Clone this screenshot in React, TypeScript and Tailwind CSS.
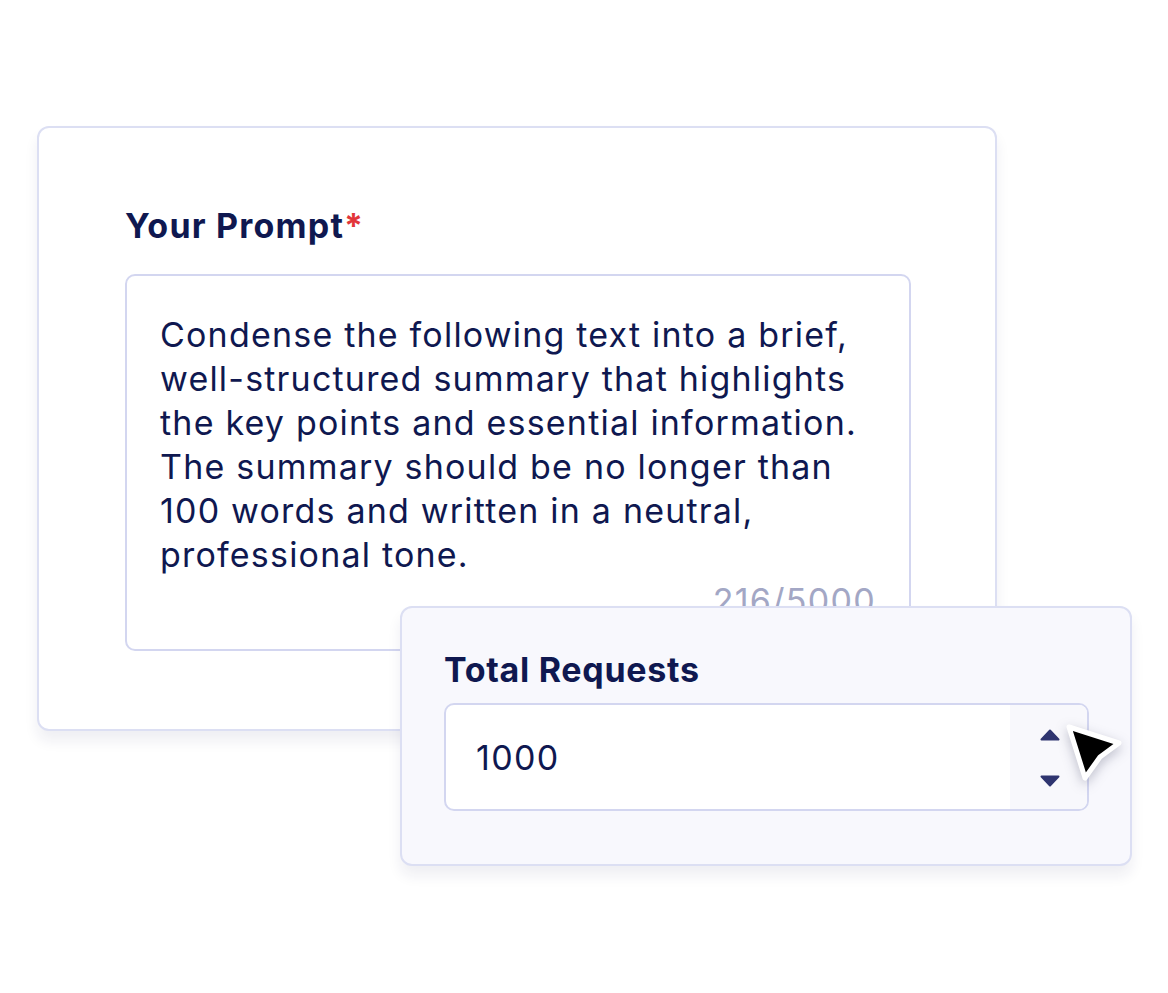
import React from 'react'

const lines = [
  'Condense the following text into a brief,',
  'well-structured summary that highlights',
  'the key points and essential information.',
  'The summary should be no longer than',
  '100 words and written in a neutral,',
  'professional tone.',
]

function Cursor() {
  return (
    <svg width="64" height="64" viewBox="0 0 64 64" className="drop-shadow-[0_4px_6px_rgba(20,24,60,0.25)]">
      <path
        d="M6 5 L56 21 L37 35 L22 56 Z"
        fill="#000"
        stroke="#fff"
        strokeWidth="5"
        strokeLinejoin="round"
      />
    </svg>
  )
}

export default function App() {
  return (
    <div className="w-[1168px] h-[993px] bg-white relative overflow-hidden font-['Inter',sans-serif] text-[#0f1850]">
      {/* prompt card */}
      <div className="absolute left-[37px] top-[126px] w-[960px] h-[605px] rounded-xl border-2 border-[#dcdff3] bg-white shadow-[0_10px_14px_rgba(30,35,80,0.07)] pl-[86px] pt-[76px]">
        <div className="text-[34px] font-bold leading-[44px] tracking-[1.2px]">
          Your Prompt<span className="text-[#e2363a]">*</span>
        </div>
        <div className="mt-[26px] w-[786px] h-[377px] rounded-[10px] border-2 border-[#d3d6f0] pl-[33px] pr-[33px] pt-[37px] flex flex-col">
          <div className="text-[34px] leading-[44px] tracking-[1.2px]">
            {lines.map((l) => (
              <div key={l}>{l}</div>
            ))}
          </div>
          <div className="mt-[2px] text-right text-[34px] leading-[44px] tracking-[1.3px] text-[#a3a7c5]">216/5000</div>
        </div>
      </div>

      {/* requests card */}
      <div className="absolute left-[400px] top-[606px] w-[732px] h-[260px] rounded-xl border-2 border-[#dcdff3] bg-[#f8f8fd] shadow-[0_10px_14px_rgba(30,35,80,0.07)] pl-[42px] pt-[40px]">
        <div className="text-[34px] font-bold leading-[44px] tracking-[0.7px]">Total Requests</div>
        <div className="mt-[11px] w-[645px] h-[108px] rounded-[10px] border-2 border-[#d3d6f0] bg-white flex overflow-hidden">
          <div className="flex-1 flex items-center pl-[30px] text-[34px] tracking-[1.3px]">1000</div>
          <div className="w-[77px] bg-[#f8f8fc] flex flex-col items-center justify-between pt-[24px] pb-[22px] pl-[2px]">
            <svg width="20" height="12" viewBox="0 0 20 12">
              <path d="M10 1.5 L18.5 10.5 L1.5 10.5 Z" fill="#2f3570" stroke="#2f3570" strokeWidth="2" strokeLinejoin="round" />
            </svg>
            <svg width="20" height="12" viewBox="0 0 20 12">
              <path d="M1.5 1.5 L18.5 1.5 L10 10.5 Z" fill="#2f3570" stroke="#2f3570" strokeWidth="2" strokeLinejoin="round" />
            </svg>
          </div>
        </div>
      </div>

      {/* pointer */}
      <div className="absolute left-[1063px] top-[722px]">
        <Cursor />
      </div>
    </div>
  )
}
